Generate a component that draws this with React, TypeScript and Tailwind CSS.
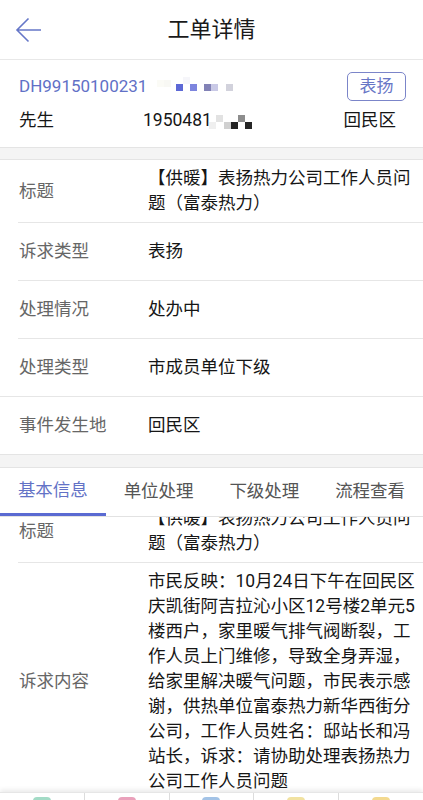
import React from 'react';

const FONT = { fontFamily: 'Roboto, "Noto Sans CJK SC", sans-serif' };

interface Field {
  label: string;
  value: string;
  fullLine?: boolean;
  last?: boolean;
}

const SUMMARY: Field[] = [
  { label: '标题', value: '【供暖】表扬热力公司工作人员问题（富泰热力）' },
  { label: '诉求类型', value: '表扬' },
  { label: '处理情况', value: '处办中' },
  { label: '处理类型', value: '市成员单位下级', fullLine: true },
  { label: '事件发生地', value: '回民区', last: true },
];

const DETAIL: Field[] = [
  { label: '标题', value: '【供暖】表扬热力公司工作人员问题（富泰热力）' },
  {
    label: '诉求内容',
    value:
      '市民反映：10月24日下午在回民区庆凯街阿吉拉沁小区12号楼2单元5楼西户，家里暖气排气阀断裂，工作人员上门维修，导致全身弄湿，给家里解决暖气问题，市民表示感谢，供热单位富泰热力新华西街分公司，工作人员姓名：邸站长和冯站长，诉求：请协助处理表扬热力公司工作人员问题',
  },
];

const TABS = ['基本信息', '单位处理', '下级处理', '流程查看'];

const TOOLBAR = ['#a3dbc6', '#eaa1bb', '#a3c3e6', '#f1e2a1', '#f3d98f'];

function Row({ field }: { field: Field }) {
  return (
    <div
      className={`flex items-center py-[6px] pr-[4px] ${
        field.last
          ? 'min-h-[57px] ml-[18px] pl-px'
          : field.fullLine
          ? 'min-h-[58px] pl-[19px] border-b border-[#e6e6e6]'
          : 'min-h-[58px] ml-[18px] pl-px border-b border-[#e6e6e6]'
      }`}
    >
      <div className="w-[129px] shrink-0 text-[#666666]">{field.label}</div>
      <div className="flex-1 text-[#161616]">{field.value}</div>
    </div>
  );
}

function Pixels({ cells }: { cells: { x: number; y: number; c: string }[] }) {
  return (
    <span className="relative inline-block w-[80px] h-[25px] align-middle">
      {cells.map((p, i) => (
        <span
          key={i}
          className="absolute w-[7px] h-[7px]"
          style={{ left: p.x, top: p.y, background: p.c }}
        />
      ))}
    </span>
  );
}

export default function App() {
  return (
    <div
      className="relative w-full h-[800px] overflow-hidden flex flex-col bg-white text-[17.5px] leading-[25px]"
      style={FONT}
    >
      {/* Header */}
      <div className="h-[60px] shrink-0 flex items-center border-b border-[#e8e8e8] relative">
        <svg className="absolute left-[15px] top-[17px]" width="27" height="26" viewBox="0 0 27 26" fill="none">
          <path d="M26 13H2M13.5 1.5L2 13l11.5 11.5" stroke="#6677c8" strokeWidth="1.6" />
        </svg>
        <div className="flex-1 text-center text-[22px] text-[#1a1a1a]">工单详情</div>
      </div>

      {/* Order summary */}
      <div className="shrink-0 pt-[12px] pb-[14px] shadow-[0_2px_3px_rgba(0,0,0,0.05)]">
        <div className="h-[29px] flex items-center pl-[19px] pr-[17px]">
          <span className="text-[17px] text-[#6170c6]">DH99150100231</span>
          <Pixels
            cells={[
              { x: 10, y: 6, c: '#fbfbf6' },
              { x: 17, y: 6, c: '#f8f8f4' },
              { x: 36, y: 3, c: '#f6f6fa' },
              { x: 29, y: 10, c: '#5d69d6' },
              { x: 43, y: 10, c: '#7d85de' },
              { x: 57, y: 10, c: '#8282b6' },
              { x: 64, y: 10, c: '#c9c9e6' },
              { x: 79, y: 10, c: '#d2d2dc' },
            ]}
          />
          <span className="ml-auto h-[29px] w-[59px] flex items-center justify-center rounded-[5px] border border-[#7b85c9] text-[17px] text-[#6876c6]">
            表扬
          </span>
        </div>
        <div className="mt-[7px] h-[25px] flex items-center pl-[19px] pr-[27px]">
          <span className="w-[124px] shrink-0 text-[#161616]">先生</span>
          <span className="text-[#161616]">1950481</span>
          <Pixels
            cells={[
              { x: -3, y: 14, c: '#efefef' },
              { x: 4, y: 7, c: '#e2e2e2' },
              { x: 12, y: 14, c: '#d0d0d0' },
              { x: 19, y: 14, c: '#232323' },
              { x: 26, y: 7, c: '#8d8d8d' },
              { x: 33, y: 14, c: '#262626' },
            ]}
          />
          <span className="ml-auto text-[#161616]">回民区</span>
        </div>
      </div>

      <div className="h-[13px] shrink-0 bg-[#f4f4f4] border-y border-[#e4e4e4]" />

      {SUMMARY.map((f) => (
        <Row key={f.label} field={f} />
      ))}

      <div className="h-[14px] shrink-0 bg-[#f4f4f4] border-y border-[#e4e4e4]" />

      {/* Tabs */}
      <div className="h-[49px] shrink-0 flex border-b border-[#e2e2e2] relative z-10 bg-white">
        {TABS.map((t, i) => (
          <div
            key={t}
            className={`flex-1 flex items-center justify-center pb-[2px] ${
              i === 0 ? 'text-[#6372c6] border-b-[3px] border-[#5a6ad2] pt-[1px]' : 'text-[#555555]'
            }`}
          >
            {t}
          </div>
        ))}
      </div>

      {/* Scrolled detail */}
      <div className="flex-1 min-h-0 overflow-hidden">
        <div className="-mt-[17px]">
          {DETAIL.map((f) => (
            <Row key={f.label} field={f} />
          ))}
        </div>
      </div>

      {/* Bottom action bar */}
      <div className="absolute left-0 right-0 top-[792px] h-[56px] flex bg-white shadow-[0_-2px_5px_rgba(0,0,0,0.09)] border-t border-[#e6e6e6]">
        {TOOLBAR.map((c, i) => (
          <div
            key={i}
            className={`flex-1 flex justify-center pt-[4px] ${i < TOOLBAR.length - 1 ? 'border-r border-[#dcdcdc]' : ''}`}
          >
            <span className="w-[18px] h-[18px] rounded-[4px]" style={{ background: c }} />
          </div>
        ))}
      </div>
    </div>
  );
}
